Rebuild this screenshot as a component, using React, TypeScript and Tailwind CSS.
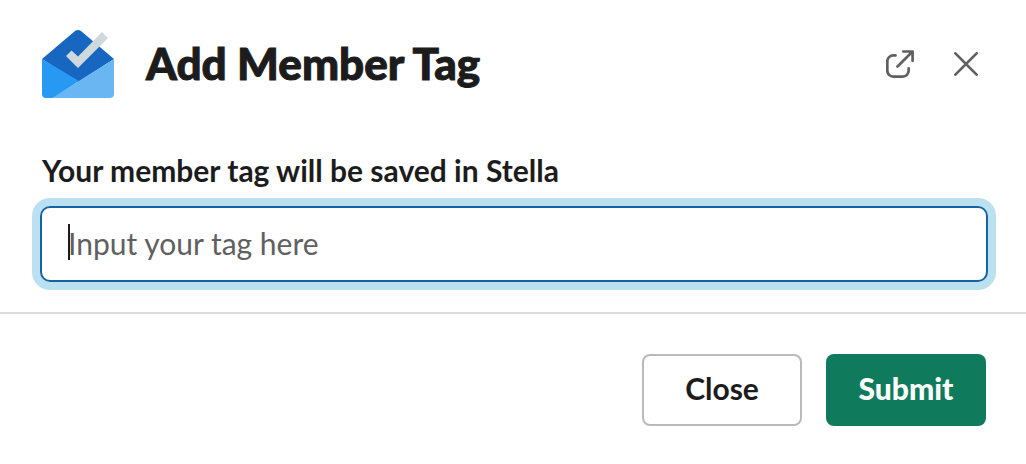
import { useState } from "react";

function MailLogo() {
  return (
    <svg viewBox="0 0 72 72" className="size-[72px] shrink-0" aria-hidden="true">
      <path d="M0 31 33 3Q36 1 39 3L72 31 36 54Z" fill="#1766c0" />
      <path d="M0 31 37 53 12 70H4Q0 70 0 66Z" fill="#2899f2" />
      <path d="M72 31V66Q72 70 68 70H10Z" fill="#69b6f3" />
      <path d="M24 28 29.5 22.5 36 28.5 60 4 66 10 36 40Z" fill="#cfd8dc" />
    </svg>
  );
}

export default function App() {
  const [tag, setTag] = useState("");

  const handleSubmit = (e: React.FormEvent) => {
    e.preventDefault();
  };

  return (
    <form
      onSubmit={handleSubmit}
      className="min-h-screen bg-white font-['Lato',sans-serif] text-[#1d1c1d]"
    >
      <header className="flex items-center pt-7 pr-12 pl-[42px]">
        <MailLogo />
        <h1 className="ml-8 flex-1 pb-0.5 text-[44px] leading-[70px] font-black [-webkit-text-stroke:1px_#1d1c1d]">
          Add Member Tag
        </h1>
        <button type="button" aria-label="Open in new window" className="text-[#616061]">
          <svg
            viewBox="0 0 28 28"
            className="size-7"
            fill="none"
            stroke="currentColor"
            strokeWidth="2.7"
            strokeLinecap="round"
            strokeLinejoin="round"
          >
            <path d="M9.5 5.4H7.3a6 6 0 0 0-6 6v9.2a6 6 0 0 0 6 6h9.4a6 6 0 0 0 6-6v-2.3" />
            <path d="M17.3 1.5h9.3v9.3M26.3 1.7 11.5 16.5" />
          </svg>
        </button>
        <button type="button" aria-label="Dismiss" className="ml-10 text-[#616061]">
          <svg
            viewBox="0 0 24 24"
            className="size-6"
            fill="none"
            stroke="currentColor"
            strokeWidth="2.7"
            strokeLinecap="round"
          >
            <path d="M1.4 1.4 22.6 22.6M22.6 1.4 1.4 22.6" />
          </svg>
        </button>
      </header>

      <div className="px-10 pt-[50px] pb-[30px]">
        <label htmlFor="tag" className="block pl-0.5 text-[30px] leading-10 font-bold">
          Your member tag will be saved in Stella
        </label>
        <div className="relative mt-4 -mr-0.5">
          <input
            id="tag"
            type="text"
            placeholder="Input your tag here"
            value={tag}
            onChange={(e) => setTag(e.target.value)}
            className="peer block h-[76px] w-full rounded-[10px] border-2 border-[#1264a3] px-[26px] pb-0.5 text-[30px] ring-8 ring-[#bbe1f1] outline-none placeholder:text-[#616061]"
          />
          {/* resting caret, replaced by the native one on focus */}
          <span className="pointer-events-none absolute top-[18px] left-7 h-9 w-0.5 bg-[#1d1c1d] peer-focus:hidden" />
        </div>
      </div>

      <footer className="flex justify-end gap-6 border-t-2 border-[#dddddd] px-10 pt-10 pb-9">
        <button
          type="button"
          className="h-[72px] w-40 rounded-lg border-2 border-[#bbbabb] pb-1 text-[30px] font-bold"
        >
          Close
        </button>
        <button
          type="submit"
          className="h-[72px] w-40 rounded-lg bg-[#0f7b5c] pb-1 text-[30px] font-black text-white"
        >
          Submit
        </button>
      </footer>
    </form>
  );
}
